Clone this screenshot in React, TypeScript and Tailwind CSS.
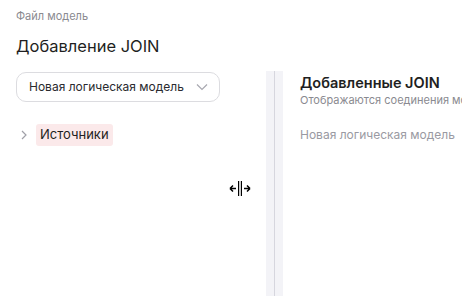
import React from "react";

export default function App() {
  return (
    <div
      className="relative w-[462px] h-[296px] overflow-hidden bg-white flex flex-col"
      style={{ fontFamily: "Inter, 'Noto Sans', sans-serif" }}
    >
      <div className="pl-4 pt-[9px] h-[71px] shrink-0">
        <div className="text-[11px] leading-[14px] text-[#8a8a90]">Файл модель</div>
        <div className="mt-[12px] text-[16.5px] leading-[22px] text-[#1f1f22]">Добавление JOIN</div>
      </div>
      <div className="flex flex-1 min-h-0">
        <div className="w-[266px] shrink-0 pl-4 pr-[46px] pt-[1px]">
          <div className="h-[30px] w-[204px] rounded-[10px] border border-[#dcdce0] flex items-center pl-[12px] pr-[10px] justify-between">
            <span className="text-[12px] text-[#2a2a2e]">Новая логическая модель</span>
            <svg width="12" height="8" viewBox="0 0 12 8" className="mr-[1px]">
              <path d="M1 1.5 L6 6.5 L11 1.5" fill="none" stroke="#a8a8b0" strokeWidth="1.2" />
            </svg>
          </div>
          <div className="mt-[22px] flex items-center">
            <svg width="8" height="10" viewBox="0 0 8 10" className="ml-[4px] mr-[8px]">
              <path d="M2 1 L6 5 L2 9" fill="none" stroke="#a0a0a8" strokeWidth="1.2" />
            </svg>
            <div className="h-[22px] px-[4px] rounded-[3px] bg-[#fbe9ea] flex items-center text-[13px] text-[#1f1f22]">
              Источники
            </div>
          </div>
        </div>
        <div className="w-[17px] shrink-0 bg-[#f3f3f7] flex justify-center">
          <div className="w-[1px] h-full bg-[#d6d6de]" />
        </div>
        <div className="flex-1 min-w-0 pl-[17px] pt-[3px] whitespace-nowrap overflow-hidden">
          <div className="text-[14.5px] leading-[18px] font-semibold text-[#1f1f22]">Добавленные JOIN</div>
          <div className="mt-[1px] text-[11px] leading-[14px] text-[#8a8a90]">Отображаются соединения модели</div>
          <div className="mt-[20px] text-[12px] leading-[16px] text-[#9a9aa2]">Новая логическая модель</div>
        </div>
      </div>
      <svg
        className="absolute left-[229px] top-[181px]"
        width="22"
        height="15"
        viewBox="0 0 22 15"
      >
        <path d="M1 7.5 H7 M1 7.5 L4 4.5 M1 7.5 L4 10.5" fill="none" stroke="#000" strokeWidth="1.5" />
        <path d="M21 7.5 H15 M21 7.5 L18 4.5 M21 7.5 L18 10.5" fill="none" stroke="#000" strokeWidth="1.5" />
        <rect x="9" y="0" width="1.2" height="15" fill="#000" />
        <rect x="11.8" y="0" width="1.2" height="15" fill="#000" />
      </svg>
    </div>
  );
}
